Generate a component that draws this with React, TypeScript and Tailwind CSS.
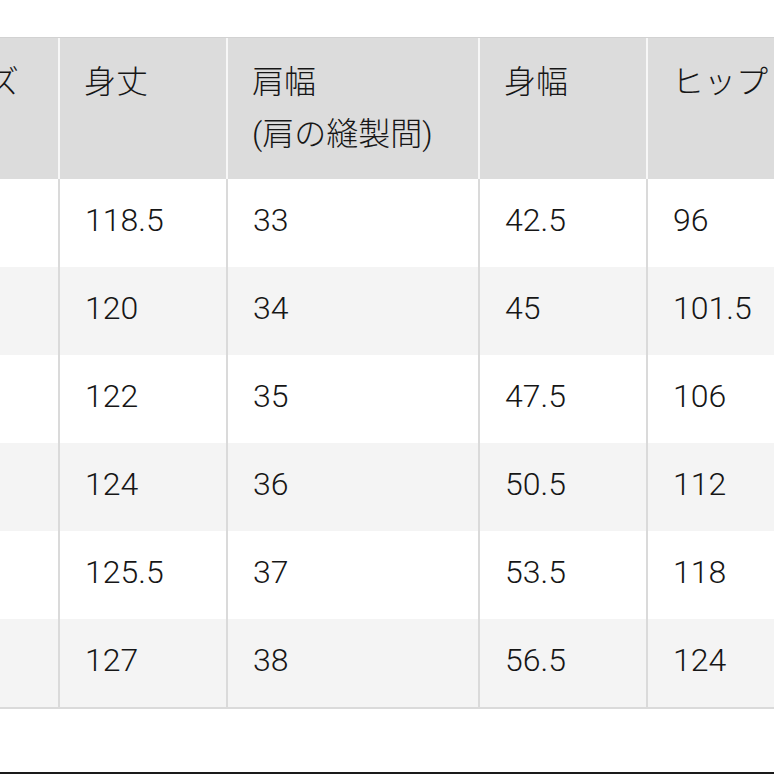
import React from 'react';

const headers: string[][] = [
  ['サイズ'],
  ['身丈'],
  ['肩幅', '(肩の縫製間)'],
  ['身幅'],
  ['ヒップ'],
];

const rows: string[][] = [
  ['XS', '118.5', '33', '42.5', '96'],
  ['S', '120', '34', '45', '101.5'],
  ['M', '122', '35', '47.5', '106'],
  ['L', '124', '36', '50.5', '112'],
  ['XL', '125.5', '37', '53.5', '118'],
  ['XXL', '127', '38', '56.5', '124'],
];

const App: React.FC = () => {
  return (
    <div
      className="relative w-[774px] h-[774px] overflow-hidden bg-white text-[#161616] font-light"
      style={{ fontFamily: 'Roboto, "Noto Sans CJK JP", "Noto Sans", sans-serif' }}
    >
      <div className="pt-[37px]">
        <div className="ml-[-100px] w-[948px] border-b-2 border-[#dadada]">
          {/* Header */}
          <div className="grid grid-cols-[160px_168px_252px_168px_200px] h-[142px] bg-[#dcdcdc] border-t border-[#d2d2d2]">
            {headers.map((lines, i) => (
              <div
                key={i}
                className="border-r-2 border-[#f7f7f7] pl-[24px] pt-[18px] text-[32px] leading-[52px] whitespace-nowrap"
              >
                {lines.map((l) => (
                  <div key={l}>{l}</div>
                ))}
              </div>
            ))}
          </div>

          {/* Body */}
          {rows.map((row, r) => (
            <div
              key={r}
              className={`grid grid-cols-[160px_168px_252px_168px_200px] h-[88px] ${
                r % 2 === 0 ? 'bg-white' : 'bg-[#f4f4f4]'
              }`}
            >
              {row.map((cell, c) => (
                <div
                  key={c}
                  className="border-r-2 border-[#dadada] pl-[25px] pt-[17px] text-[32px] leading-[48px] whitespace-nowrap"
                >
                  {c === 0 ? '' : cell}
                </div>
              ))}
            </div>
          ))}
        </div>
      </div>

      <div className="absolute left-0 right-0 bottom-0 h-[2px] bg-[#1a1a1a]" />
    </div>
  );
};

export default App;
